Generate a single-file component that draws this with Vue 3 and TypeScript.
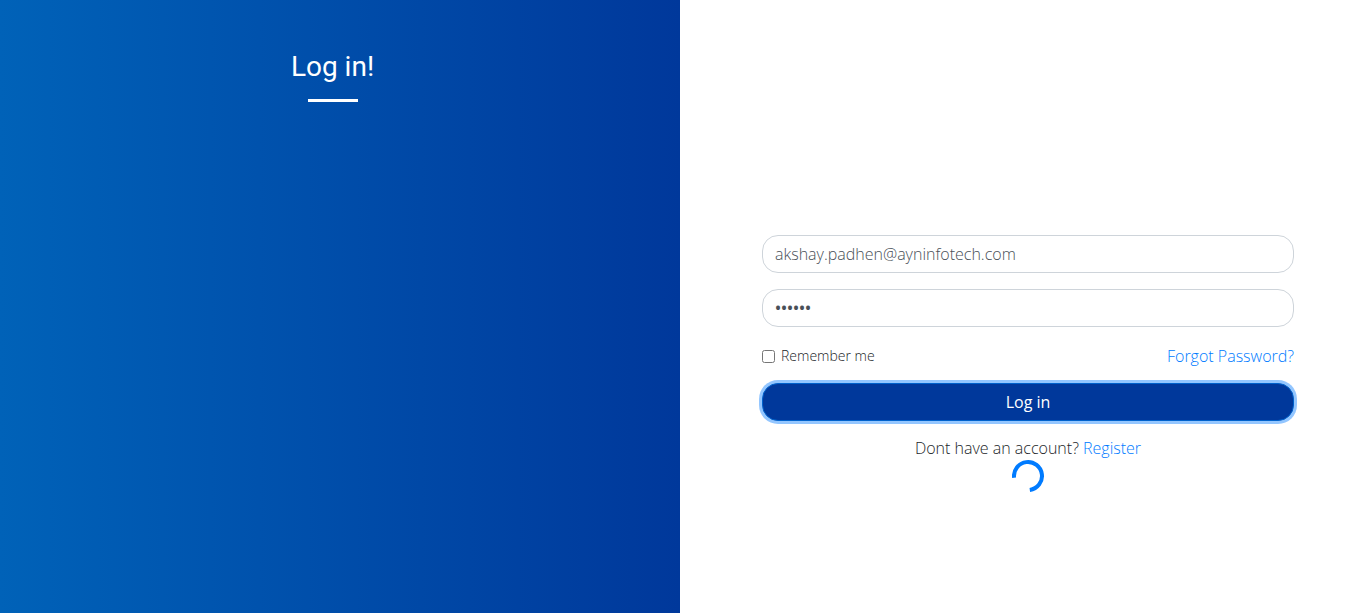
<script setup lang="ts">
import { ref } from 'vue'

const email = ref('akshay.padhen@ayninfotech.com')
const password = ref('secret')
const remember = ref(false)
</script>

<template>
  <main class="page">
    <section class="intro">
      <h1>Log in!</h1>
      <span class="rule"></span>
    </section>
    <section class="panel">
      <form @submit.prevent>
        <input v-model="email" class="field" type="email" aria-label="Email" />
        <input v-model="password" class="field secret" type="password" aria-label="Password" />
        <div class="options">
          <label class="remember" for="remember">
            <input id="remember" v-model="remember" type="checkbox" />
            <span>Remember me</span>
          </label>
          <a href="#">Forgot Password?</a>
        </div>
        <button class="submit" type="submit">Log in</button>
        <p class="register">Dont have an account? <a href="#">Register</a></p>
        <svg class="spinner" viewBox="0 0 32 32" aria-hidden="true">
          <path d="M2.1 17.8A14 14 0 1 1 17.8 29.9" fill="none" stroke="#007bff" stroke-width="4" />
        </svg>
      </form>
    </section>
  </main>
</template>

<style>
body {
  margin: 0;
}
</style>

<style scoped>
* {
  box-sizing: border-box;
}

.page {
  display: grid;
  grid-template-columns: 1fr 1fr;
  min-height: 100vh;
  background: #fff;
  color: #212529;
  font-family: "Open Sans", "Noto Sans", sans-serif;
  font-size: 16px;
  font-weight: 300;
  line-height: 24px;
}

.intro {
  display: flex;
  flex-direction: column;
  align-items: center;
  padding: 48px 15px 0 0;
  background: linear-gradient(to right, #0062b8, #00389b);
}

h1 {
  margin: 0;
  color: #fff;
  font-family: Roboto, sans-serif;
  font-size: 28px;
  font-weight: 400;
  line-height: 38px;
}

.rule {
  width: 50px;
  height: 3px;
  margin-top: 13px;
  background: #fff;
}

.panel {
  padding: 235px 66px 24px 82px;
}

form {
  display: flex;
  flex-direction: column;
}

.field {
  width: 100%;
  height: 38px;
  margin: 0 0 16px;
  padding: 6px 12px;
  border: 1px solid #ced4da;
  border-radius: 16px;
  background: #fff;
  color: #495057;
  font: inherit;
  outline: none;
}

.secret {
  font-weight: 600;
}

.options {
  display: flex;
  align-items: center;
  justify-content: space-between;
  margin: 1px 0 15px;
}

.remember {
  display: flex;
  align-items: center;
  gap: 6px;
  font-size: 14px;
}

.remember input {
  width: 13px;
  height: 13px;
  margin: 0;
}

a {
  color: #007bff;
  text-decoration: none;
}

.submit {
  height: 38px;
  padding: 0;
  border: 1px solid #0062cc;
  border-radius: 16px;
  background: #00389b;
  box-shadow: 0 0 0 3px #93c6ff;
  color: #fff;
  font: inherit;
  font-weight: 400;
}

.register {
  margin: 15px 0 0;
  text-align: center;
}

.spinner {
  align-self: center;
  width: 32px;
  height: 32px;
}
</style>
